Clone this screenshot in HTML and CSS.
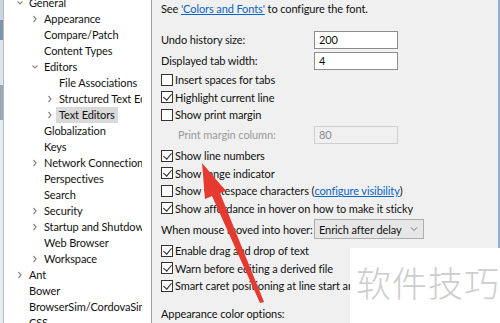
FILE: index.html
```html
<!DOCTYPE html>
<html lang="en">
<head>
    <meta charset="UTF-8">
    <title>Text Editors</title>
    <link rel="stylesheet" href="styles.css">
</head>
<body>
    <div class="edge"></div>
    <div class="tree">
        <ul class="nodes">
            <li class="node lvl0"><span class="twisty"><svg viewBox="0 0 8 8"><path d="M1.5 2.5 L4 5 L6.5 2.5"/></svg></span><span class="label">General</span></li>
            <li class="node lvl1"><span class="twisty"><svg viewBox="0 0 8 8"><path d="M2.5 1 L5 4 L2.5 7"/></svg></span><span class="label">Appearance</span></li>
            <li class="node lvl1"><span class="twisty"></span><span class="label">Compare/Patch</span></li>
            <li class="node lvl1"><span class="twisty"></span><span class="label">Content Types</span></li>
            <li class="node lvl1"><span class="twisty"><svg viewBox="0 0 8 8"><path d="M1.5 2.5 L4 5 L6.5 2.5"/></svg></span><span class="label">Editors</span></li>
            <li class="node lvl2"><span class="twisty"></span><span class="label">File Associations</span></li>
            <li class="node lvl2"><span class="twisty"><svg viewBox="0 0 8 8"><path d="M2.5 1 L5 4 L2.5 7"/></svg></span><span class="label">Structured Text Ec</span></li>
            <li class="node lvl2"><span class="twisty"><svg viewBox="0 0 8 8"><path d="M2.5 1 L5 4 L2.5 7"/></svg></span><span class="label selected">Text Editors</span></li>
            <li class="node lvl1"><span class="twisty"></span><span class="label">Globalization</span></li>
            <li class="node lvl1"><span class="twisty"></span><span class="label">Keys</span></li>
            <li class="node lvl1"><span class="twisty"><svg viewBox="0 0 8 8"><path d="M2.5 1 L5 4 L2.5 7"/></svg></span><span class="label">Network Connections</span></li>
            <li class="node lvl1"><span class="twisty"></span><span class="label">Perspectives</span></li>
            <li class="node lvl1"><span class="twisty"></span><span class="label">Search</span></li>
            <li class="node lvl1"><span class="twisty"><svg viewBox="0 0 8 8"><path d="M2.5 1 L5 4 L2.5 7"/></svg></span><span class="label">Security</span></li>
            <li class="node lvl1"><span class="twisty"><svg viewBox="0 0 8 8"><path d="M2.5 1 L5 4 L2.5 7"/></svg></span><span class="label">Startup and Shutdown</span></li>
            <li class="node lvl1"><span class="twisty"></span><span class="label">Web Browser</span></li>
            <li class="node lvl1"><span class="twisty"><svg viewBox="0 0 8 8"><path d="M2.5 1 L5 4 L2.5 7"/></svg></span><span class="label">Workspace</span></li>
            <li class="node lvl0"><span class="twisty"><svg viewBox="0 0 8 8"><path d="M2.5 1 L5 4 L2.5 7"/></svg></span><span class="label">Ant</span></li>
            <li class="node lvl0"><span class="twisty"></span><span class="label">Bower</span></li>
            <li class="node lvl0"><span class="twisty"></span><span class="label">BrowserSim/CordovaSim</span></li>
            <li class="node lvl0"><span class="twisty"></span><span class="label">CSS</span></li>
        </ul>
    </div>
    <div class="prefs">
        <div class="intro">See <a href="#">'Colors and Fonts'</a> to configure the font.</div>

        <div class="field"><span class="field-name">Undo history size:</span><span class="input">200</span></div>
        <div class="field"><span class="field-name">Displayed tab width:</span><span class="input">4</span></div>

        <div class="check"><span class="box"></span>Insert spaces for tabs</div>
        <div class="check"><span class="box on"></span>Highlight current line</div>
        <div class="check"><span class="box"></span>Show print margin</div>
        <div class="field sub"><span class="field-name">Print margin column:</span><span class="input disabled">80</span></div>

        <div class="check"><span class="box on"></span>Show line numbers</div>
        <div class="check"><span class="box on"></span>Show range indicator</div>
        <div class="check"><span class="box"></span>Show whitespace characters&nbsp;(<a href="#">configure visibility</a>)</div>
        <div class="check"><span class="box on"></span>Show affordance in hover on how to make it sticky</div>

        <div class="field hover"><span class="field-name">When mouse moved into hover:</span><span class="select">Enrich after delay<svg viewBox="0 0 8 8"><path d="M1 2.5 L4 5.5 L7 2.5"/></svg></span></div>

        <div class="check"><span class="box on"></span>Enable drag and drop of text</div>
        <div class="check"><span class="box on"></span>Warn before editing a derived file</div>
        <div class="check"><span class="box on"></span>Smart caret positioning at line start and end</div>

        <div class="section">Appearance color options:</div>
    </div>

    <svg class="arrow" viewBox="0 0 500 323" width="500" height="323">
        <polygon points="202,163 226,191 220,193 264,302 260,303 212,196 205,199"/>
    </svg>

    <div class="stamp">软件技巧</div>
</body>
</html>
```

FILE: styles.css
```css
* {
    box-sizing: border-box;
}
html, body {
    margin: 0;
    padding: 0;
    height: 100%;
}
body {
    display: flex;
    width: 500px;
    height: 323px;
    overflow: hidden;
    font-family: Lato, "Noto Sans", sans-serif;
    font-size: 11px;
    letter-spacing: -0.1px;
    color: #111;
    background: #f0f0f0;
}
.edge {
    width: 3px;
    flex-shrink: 0;
    background: linear-gradient(#c9d5e2 0, #c9d5e2 20px, #7f93ab 20px, #7f93ab 40px, #dde4ec 40px, #dde4ec 85px, #9aa8b8 85px, #9aa8b8 120px, #e6ebf1 120px);
}
.tree {
    width: 149px;
    flex-shrink: 0;
    padding-right: 9px;
    background: #fff;
    border-left: 1px solid #b9b9b9;
    border-right: 1px solid #a0a0a0;
}
.nodes {
    list-style: none;
    margin: -5px 0 0 0;
    padding: 0;
    overflow: hidden;
}
.node {
    display: flex;
    align-items: center;
    height: 16px;
    white-space: nowrap;
}
.lvl0 { padding-left: 10px; }
.lvl1 { padding-left: 25px; }
.lvl2 { padding-left: 40px; }
.twisty {
    width: 12px;
    height: 8px;
    flex-shrink: 0;
    display: flex;
}
.twisty svg {
    width: 8px;
    height: 8px;
    margin-left: 2px;
    fill: none;
    stroke: #8a8a8a;
    stroke-width: 1.2;
}
.label {
    padding: 0 3px;
    line-height: 16px;
}
.label.selected {
    background: #d9d9d9;
}
.prefs {
    flex: 1;
    display: flex;
    flex-direction: column;
    padding-left: 9px;
    border-right: 2px solid #8fb1d6;
    white-space: nowrap;
}
a {
    color: #0a64c8;
    text-decoration: underline;
}
.intro {
    height: 18px;
    line-height: 18px;
    margin-bottom: 11px;
}
.field {
    display: flex;
    align-items: center;
    height: 21px;
}
.field-name {
    width: 153px;
    flex-shrink: 0;
}
.sub {
    height: 22px;
    margin-bottom: 1.5px;
}
.sub .field-name {
    padding-left: 17px;
    color: #9a9a9a;
}
.input {
    width: 84px;
    height: 18px;
    line-height: 16px;
    padding-left: 4px;
    background: #fff;
    border: 1px solid #8c8c8c;
}
.input.disabled {
    background: #f0f0f0;
    border-color: #cfcfcf;
    color: #8a8a8a;
}
.hover {
    height: 23px;
    margin-top: 0.5px;
    margin-bottom: 1.5px;
}
.select {
    display: flex;
    align-items: center;
    justify-content: space-between;
    width: 110px;
    height: 20px;
    padding: 0 5px 0 4px;
    background: #e6e6e6;
    border: 1px solid #adadad;
}
.select svg {
    width: 8px;
    height: 8px;
    fill: none;
    stroke: #707070;
    stroke-width: 1;
}
.check {
    display: flex;
    align-items: center;
    height: 17.5px;
}
.box {
    width: 12px;
    height: 12px;
    margin-right: 2px;
    flex-shrink: 0;
    background: #fff;
    border: 1px solid #333;
    position: relative;
}
.box.on::after {
    content: "";
    position: absolute;
    left: 3px;
    top: 0px;
    width: 4px;
    height: 7px;
    border-right: 1px solid #222;
    border-bottom: 1px solid #222;
    transform: rotate(40deg);
}
.section {
    height: 17.5px;
    line-height: 17.5px;
    margin-top: 10px;
}
.arrow {
    position: absolute;
    left: 0;
    top: 0;
    pointer-events: none;
}
.arrow polygon {
    fill: #e53a2f;
}
.stamp {
    position: absolute;
    left: 350px;
    top: 248px;
    width: 150px;
    height: 75px;
    padding: 14px 0 0 6px;
    background: #fff;
    color: #cdcdcd;
    font-family: "Noto Sans CJK SC", sans-serif;
    font-size: 35px;
    font-weight: 300;
    line-height: 40px;
    letter-spacing: 1px;
}
```
